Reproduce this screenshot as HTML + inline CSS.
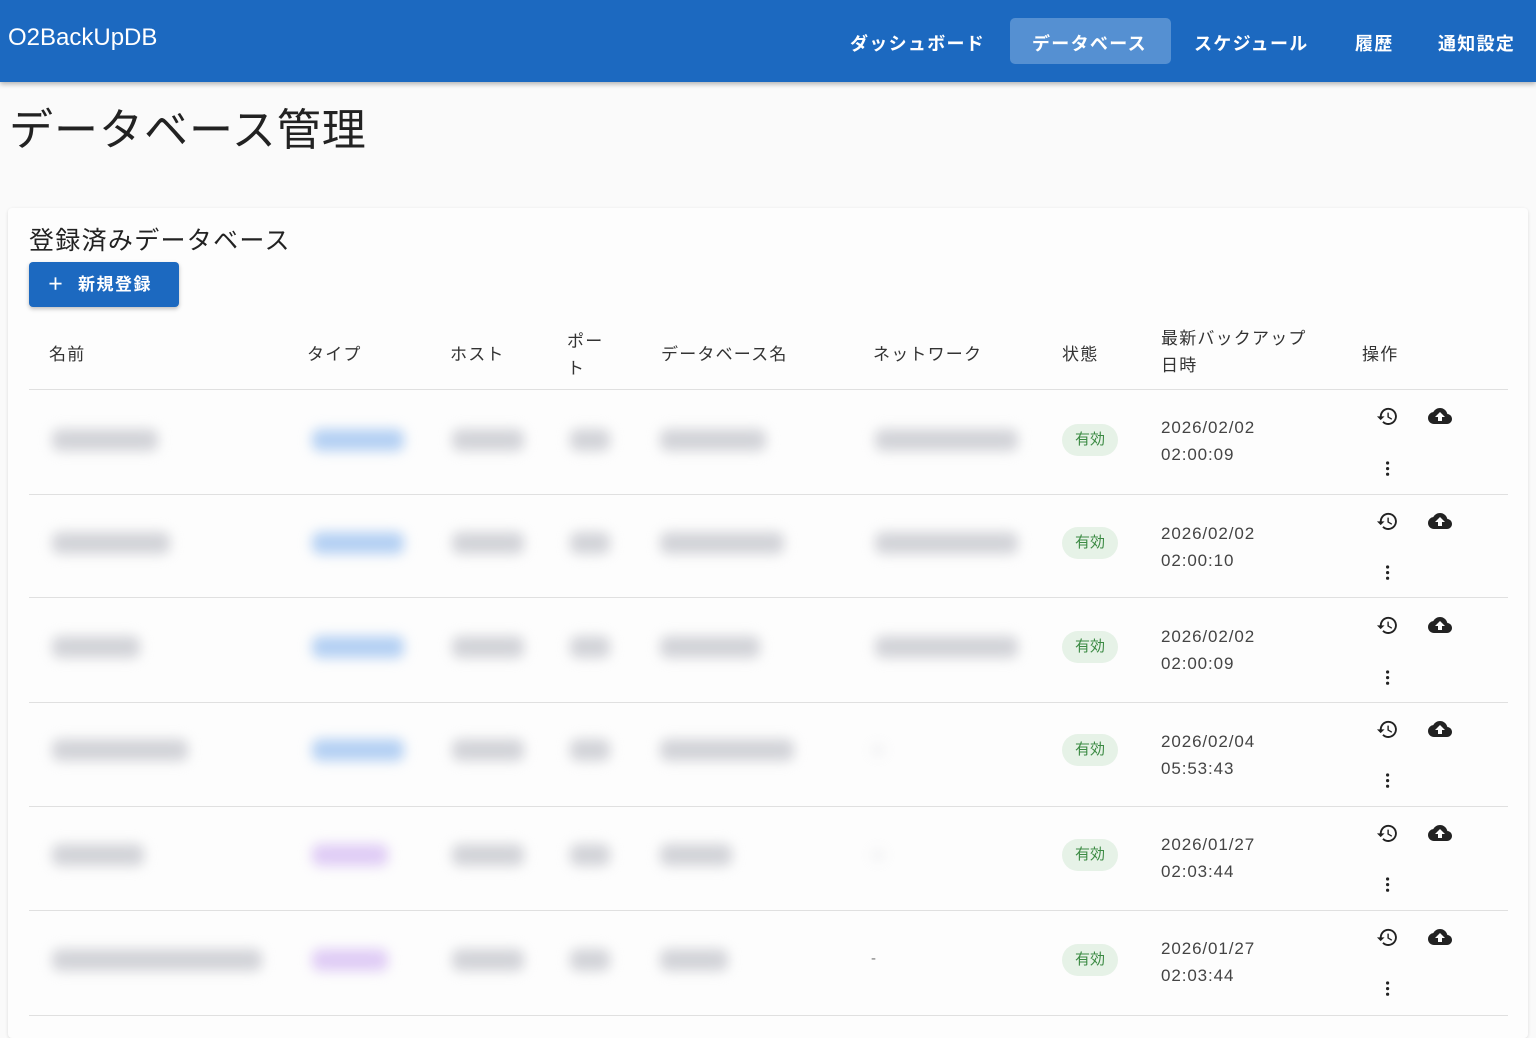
<!DOCTYPE html>
<html><head><meta charset="utf-8"><style>
*{margin:0;padding:0;box-sizing:border-box}
body{width:1536px;height:1024px;overflow:hidden;background:#fafafa;font-family:"Liberation Sans","Noto Sans CJK JP",sans-serif;color:#222;position:relative}
.a{position:absolute}
.hdr{left:0;top:0;width:1536px;height:82px;background:#1c69c0;box-shadow:0 2px 5px rgba(0,0,0,.3)}
.logo{left:8px;top:24px;color:#fff;font-size:24px}
.nav{top:30px;color:#fff;font-size:18px;font-weight:bold;letter-spacing:1.3px}
.act{left:1010px;top:18px;width:161px;height:46px;background:#5590d2;border-radius:5px}
.card{left:8px;top:208px;width:1520px;height:830px;background:#fdfdfd;border-radius:4px;box-shadow:0 1px 3px rgba(0,0,0,.12)}
.th{top:340px;font-size:17px;color:#333;letter-spacing:1.2px}
.line{left:29px;width:1479px;height:1px;background:#e0e0e0}
.b{height:22px;border-radius:8px;background:#d2d3d8;filter:blur(6px)}
.bl{background:#b4d0f3}.pu{background:#dfccf5}
.chip{left:1062px;width:56px;height:32px;border-radius:16px;background:#e6f2e7;color:#3b8a43;font-size:15px;text-align:center;line-height:32px}
.dt{left:1161px;font-size:17px;color:#444;line-height:27px;letter-spacing:0.9px}
</style></head><body>
<div class="a hdr"></div>
<div class="a logo">O2BackUpDB</div>
<div class="a act"></div>
<div class="a nav" style="left:850px">ダッシュボード</div>
<div class="a nav" style="left:1032px">データベース</div>
<div class="a nav" style="left:1194px">スケジュール</div>
<div class="a nav" style="left:1355px">履歴</div>
<div class="a nav" style="left:1438px">通知設定</div>
<div class="a" style="left:9px;top:94px;font-size:44px;color:#222;letter-spacing:1px">データベース管理</div>
<div class="a card"></div>
<div class="a" style="left:29px;top:221px;font-size:25px;color:#222;letter-spacing:1.3px">登録済みデータベース</div>
<div class="a" style="left:29px;top:262px;width:150px;height:45px;background:#1c69c0;border-radius:4px;box-shadow:0 2px 4px rgba(0,0,0,.25);color:#fff;font-size:17px;font-weight:bold;line-height:45px;padding-left:18px;letter-spacing:1.5px">＋&nbsp; 新規登録</div>
<div class="a th" style="left:49px">名前</div>
<div class="a th" style="left:307px">タイプ</div>
<div class="a th" style="left:450px">ホスト</div>
<div class="a th" style="left:567px;top:328px;line-height:27px">ポー<br>ト</div>
<div class="a th" style="left:661px">データベース名</div>
<div class="a th" style="left:873px">ネットワーク</div>
<div class="a th" style="left:1062px">状態</div>
<div class="a th" style="left:1161px;top:325px;line-height:27px">最新バックアップ<br>日時</div>
<div class="a th" style="left:1362px">操作</div>
<div class="a line" style="top:389px"></div>
<div class="a line" style="top:494px"></div>
<div class="a line" style="top:597px"></div>
<div class="a line" style="top:702px"></div>
<div class="a line" style="top:806px"></div>
<div class="a line" style="top:910px"></div>
<div class="a line" style="top:1015px"></div>

<svg width="0" height="0" style="position:absolute"><defs>
<g id="hist"><path d="M13 3a9 9 0 0 0-9 9H1l3.9 3.9L9 12H6a7 7 0 1 1 2.05 4.950l-1.42 1.42A9 9 0 1 0 13 3zm-1 5v5l4.28 2.54.72-1.21-3.5-2.08V8H12z" fill="#222"/></g>
<g id="cloud"><path d="M19.35 10.04A7.49 7.49 0 0 0 12 4C9.11 4 6.6 5.64 5.35 8.04A5.994 5.994 0 0 0 0 14c0 3.31 2.690 6 6 6h13c2.76 0 5-2.24 5-5 0-2.64-2.05-4.78-4.65-4.96zM14 13v4h-4v-4H7l5-5 5 5h-3z" fill="#222"/></g>
<g id="dots"><circle cx="12" cy="5" r="2" fill="#222"/><circle cx="12" cy="12" r="2" fill="#222"/><circle cx="12" cy="19" r="2" fill="#222"/></g>
</defs></svg>

<div class="a b" style="left:52px;top:429px;width:106px"></div>
<div class="a b bl" style="left:312px;top:429px;width:92px"></div>
<div class="a b" style="left:452px;top:429px;width:72px"></div>
<div class="a b" style="left:570px;top:429px;width:40px"></div>
<div class="a b" style="left:660px;top:429px;width:106px"></div>
<div class="a b" style="left:875px;top:429px;width:143px"></div>

<div class="a b" style="left:52px;top:532px;width:118px"></div>
<div class="a b bl" style="left:312px;top:532px;width:92px"></div>
<div class="a b" style="left:452px;top:532px;width:72px"></div>
<div class="a b" style="left:570px;top:532px;width:40px"></div>
<div class="a b" style="left:660px;top:532px;width:124px"></div>
<div class="a b" style="left:875px;top:532px;width:143px"></div>

<div class="a b" style="left:52px;top:636px;width:88px"></div>
<div class="a b bl" style="left:312px;top:636px;width:92px"></div>
<div class="a b" style="left:452px;top:636px;width:72px"></div>
<div class="a b" style="left:570px;top:636px;width:40px"></div>
<div class="a b" style="left:660px;top:636px;width:100px"></div>
<div class="a b" style="left:875px;top:636px;width:143px"></div>

<div class="a b" style="left:52px;top:739px;width:136px"></div>
<div class="a b bl" style="left:312px;top:739px;width:92px"></div>
<div class="a b" style="left:452px;top:739px;width:72px"></div>
<div class="a b" style="left:570px;top:739px;width:40px"></div>
<div class="a b" style="left:660px;top:739px;width:134px"></div>
<div class="a b" style="left:872px;top:744px;width:12px;height:12px;opacity:.3"></div>

<div class="a b" style="left:52px;top:844px;width:92px"></div>
<div class="a b pu" style="left:312px;top:844px;width:76px"></div>
<div class="a b" style="left:452px;top:844px;width:72px"></div>
<div class="a b" style="left:570px;top:844px;width:40px"></div>
<div class="a b" style="left:660px;top:844px;width:72px"></div>
<div class="a b" style="left:872px;top:849px;width:12px;height:12px;opacity:.3"></div>

<div class="a b" style="left:52px;top:949px;width:210px"></div>
<div class="a b pu" style="left:312px;top:949px;width:76px"></div>
<div class="a b" style="left:452px;top:949px;width:72px"></div>
<div class="a b" style="left:570px;top:949px;width:40px"></div>
<div class="a b" style="left:660px;top:949px;width:68px"></div>
<div class="a" style="left:871px;top:950px;color:#777;font-size:15px">-</div>

<div class="a chip" style="top:424px">有効</div>
<div class="a chip" style="top:527px">有効</div>
<div class="a chip" style="top:631px">有効</div>
<div class="a chip" style="top:734px">有効</div>
<div class="a chip" style="top:839px">有効</div>
<div class="a chip" style="top:944px">有効</div>

<div class="a dt" style="top:414px">2026/02/02<br>02:00:09</div>
<div class="a dt" style="top:520px">2026/02/02<br>02:00:10</div>
<div class="a dt" style="top:623px">2026/02/02<br>02:00:09</div>
<div class="a dt" style="top:728px">2026/02/04<br>05:53:43</div>
<div class="a dt" style="top:831px">2026/01/27<br>02:03:44</div>
<div class="a dt" style="top:935px">2026/01/27<br>02:03:44</div>

<svg class="a" style="left:0;top:0" width="1536" height="1024">
<g transform="translate(1376,405) scale(0.95)"><use href="#hist"/></g><g transform="translate(1428,404)"><use href="#cloud"/></g><g transform="translate(1378,459) scale(0.8)"><use href="#dots"/></g>
<g transform="translate(1376,510) scale(0.95)"><use href="#hist"/></g><g transform="translate(1428,509)"><use href="#cloud"/></g><g transform="translate(1378,563) scale(0.8)"><use href="#dots"/></g>
<g transform="translate(1376,614) scale(0.95)"><use href="#hist"/></g><g transform="translate(1428,613)"><use href="#cloud"/></g><g transform="translate(1378,668) scale(0.8)"><use href="#dots"/></g>
<g transform="translate(1376,718) scale(0.95)"><use href="#hist"/></g><g transform="translate(1428,717)"><use href="#cloud"/></g><g transform="translate(1378,771) scale(0.8)"><use href="#dots"/></g>
<g transform="translate(1376,822) scale(0.95)"><use href="#hist"/></g><g transform="translate(1428,821)"><use href="#cloud"/></g><g transform="translate(1378,875) scale(0.8)"><use href="#dots"/></g>
<g transform="translate(1376,926) scale(0.95)"><use href="#hist"/></g><g transform="translate(1428,925)"><use href="#cloud"/></g><g transform="translate(1378,979) scale(0.8)"><use href="#dots"/></g>
</svg>
</body></html>
